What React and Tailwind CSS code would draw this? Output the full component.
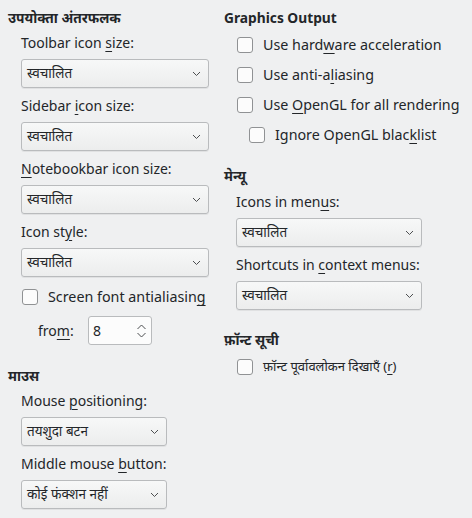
import React from "react";

const FONT = { fontFamily: '"Noto Sans", "Noto Sans Devanagari", "Lohit Devanagari", sans-serif' };

function U({ children }) {
  return <span className="underline underline-offset-[3px] decoration-[1px]">{children}</span>;
}

function Chevron() {
  return (
    <svg width="9" height="6" viewBox="0 0 9 6" className="shrink-0">
      <path d="M1 1 L4.5 4.5 L8 1" fill="none" stroke="#4d4f51" strokeWidth="1" />
    </svg>
  );
}

function Select({ value, w }) {
  return (
    <div
      className={`${w} h-[29px] flex items-center justify-between pl-[5px] pr-[7px] rounded-[3px] border border-[#b9bbbd] bg-gradient-to-b from-[#f7f8f8] to-[#eceded] shadow-[0_1px_0_rgba(0,0,0,0.06)] text-[13.5px] text-[#232629]`}
    >
      <span>{value}</span>
      <Chevron />
    </div>
  );
}

function Check({ children, indent, size = "text-[14px]" }) {
  return (
    <div className={`flex items-center h-[20px] ${indent}`}>
      <div className="w-[16px] h-[16px] rounded-[3px] border border-[#909294] bg-[#fcfcfc] shrink-0" />
      <span className={`ml-[10px] ${size} text-[#232629] whitespace-nowrap`}>{children}</span>
    </div>
  );
}

function Label({ children }) {
  return (
    <div className="h-[18px] flex items-center text-[14px] text-[#232629] whitespace-nowrap">
      <span>{children}</span>
    </div>
  );
}

function Heading({ children }) {
  return (
    <div className="h-[18px] flex items-center text-[13.75px] font-bold text-[#232629] whitespace-nowrap">
      <span>{children}</span>
    </div>
  );
}

export default function App() {
  return (
    <div style={FONT} className="w-[472px] h-[518px] bg-[#eff0f1] flex overflow-hidden">
      {/* Left column */}
      <div className="w-[216px] pl-[8px] pt-[9px] flex flex-col">
        <Heading>उपयोक्ता अंतरफलक</Heading>
        <div className="pl-[13px] mt-[6px] flex flex-col gap-[8px]">
          <Label>Toolbar icon <U>s</U>ize:</Label>
          <Select value="स्वचालित" w="w-[188px]" />
          <Label>Sidebar <U>i</U>con size:</Label>
          <Select value="स्वचालित" w="w-[188px]" />
          <Label><U>N</U>otebookbar icon size:</Label>
          <Select value="स्वचालित" w="w-[188px]" />
          <Label>Icon st<U>y</U>le:</Label>
          <Select value="स्वचालित" w="w-[188px]" />
        </div>
        <div className="pl-[14px] mt-[10px]">
          <Check size="text-[14.3px]">Screen font antialiasin<U>g</U></Check>
        </div>
        <div className="flex items-center mt-[9px] pl-[30px]">
          <span className="text-[14px] text-[#232629] w-[50px]">fro<U>m</U>:</span>
          <div className="w-[64px] h-[29px] rounded-[3px] border border-[#b9bbbd] bg-[#fcfcfc] flex items-center justify-between pl-[4px] pr-[4px] text-[14px] text-[#232629]">
            <span>8</span>
            <svg width="11" height="16" viewBox="0 0 11 16">
              <path d="M1.5 6 L5.5 2 L9.5 6" fill="none" stroke="#4d4f51" strokeWidth="1" />
              <path d="M1.5 10 L5.5 14 L9.5 10" fill="none" stroke="#4d4f51" strokeWidth="1" />
            </svg>
          </div>
        </div>
        <div className="mt-[22px]">
          <Heading>माउस</Heading>
        </div>
        <div className="pl-[13px] mt-[6px] flex flex-col gap-[8px]">
          <Label>Mouse <U>p</U>ositioning:</Label>
          <Select value="तयशुदा बटन" w="w-[146px]" />
          <Label>Middle mouse <U>b</U>utton:</Label>
          <Select value="कोई फंक्शन नहीं" w="w-[146px]" />
        </div>
      </div>

      {/* Right column */}
      <div className="flex-1 pl-[8px] pt-[9px] flex flex-col">
        <Heading>Graphics Output</Heading>
        <div className="flex flex-col gap-[10px] mt-[8px]">
          <Check indent="pl-[13px]" size="text-[14.3px]">Use hard<U>w</U>are acceleration</Check>
          <Check indent="pl-[13px]" size="text-[14.3px]">Use anti-a<U>l</U>iasing</Check>
          <Check indent="pl-[13px]" size="text-[14.3px]">Use <U>O</U>penGL for all rendering</Check>
          <Check indent="pl-[25px]" size="text-[14.3px]">Ignore OpenGL blac<U>k</U>list</Check>
        </div>
        <div className="mt-[22px]">
          <Heading>मेन्यू</Heading>
        </div>
        <div className="pl-[12px] mt-[7px] flex flex-col gap-[8px]">
          <Label>Icons in men<U>u</U>s:</Label>
          <Select value="स्वचालित" w="w-[186px]" />
          <Label>Shortcuts in <U>c</U>ontext menus:</Label>
          <Select value="स्वचालित" w="w-[186px]" />
        </div>
        <div className="mt-[21px]">
          <Heading>फ़ॉन्ट सूची</Heading>
        </div>
        <div className="mt-[8px]">
          <Check indent="pl-[13px]" size="text-[13px]">फ़ॉन्ट पूर्वावलोकन दिखाएँ (<U>r</U>)</Check>
        </div>
      </div>
    </div>
  );
}
